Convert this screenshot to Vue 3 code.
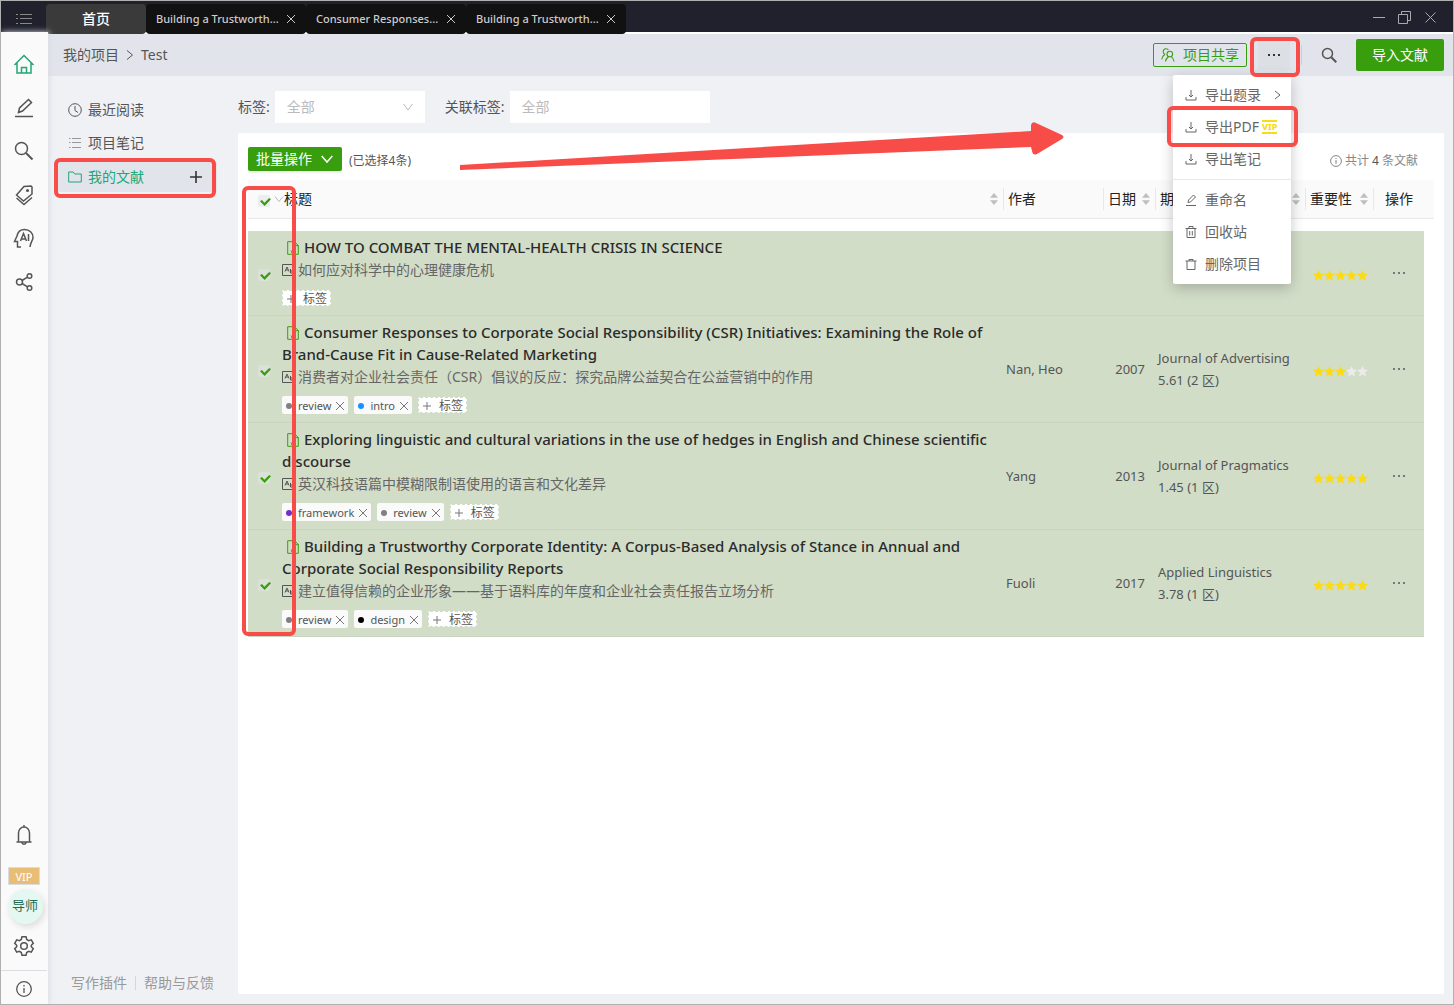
<script setup>
import { ref } from 'vue'

const tabs = ['Building a Trustworth...', 'Consumer Responses...', 'Building a Trustworth...']

const query = ref('')
const tagFilter = ref('')
const allSelected = ref(true)

const papers = ref([
  {
    id: 1, selected: true,
    title: 'HOW TO COMBAT THE MENTAL-HEALTH CRISIS IN SCIENCE',
    translation: '如何应对科学中的心理健康危机',
    tags: [], authors: '', year: '', journal: '', impact: '', stars: 5
  },
  {
    id: 2, selected: true,
    title: 'Consumer Responses to Corporate Social Responsibility (CSR) Initiatives: Examining the Role of Brand-Cause Fit in Cause-Related Marketing',
    translation: '消费者对企业社会责任（CSR）倡议的反应：探究品牌公益契合在公益营销中的作用',
    tags: [{ name: 'review', color: 'gray' }, { name: 'intro', color: 'blue' }],
    authors: 'Nan, Heo', year: '2007', journal: 'Journal of Advertising', impact: '5.61 (2 区)', stars: 3
  },
  {
    id: 3, selected: true,
    title: 'Exploring linguistic and cultural variations in the use of hedges in English and Chinese scientific discourse',
    translation: '英汉科技语篇中模糊限制语使用的语言和文化差异',
    tags: [{ name: 'framework', color: 'purple' }, { name: 'review', color: 'gray' }],
    authors: 'Yang', year: '2013', journal: 'Journal of Pragmatics', impact: '1.45 (1 区)', stars: 5
  },
  {
    id: 4, selected: true,
    title: 'Building a Trustworthy Corporate Identity: A Corpus-Based Analysis of Stance in Annual and Corporate Social Responsibility Reports',
    translation: '建立值得信赖的企业形象——基于语料库的年度和企业社会责任报告立场分析',
    tags: [{ name: 'review', color: 'gray' }, { name: 'design', color: 'black' }],
    authors: 'Fuoli', year: '2017', journal: 'Applied Linguistics', impact: '3.78 (1 区)', stars: 5
  }
])
</script>

<template>
  <div class="window">
    <header class="titlebar">
      <button class="menu-toggle" aria-label="菜单">
        <svg width="16" height="12" viewBox="0 0 16 12" fill="none" stroke="currentColor"><path d="M4 1.500h12M4 5.500h12M4 10.500h12M0 1.500h2M0 5.500h2M0 10.500h2" /></svg>
      </button>
      <button class="tab home">首页</button>
      <div v-for="(tab, i) in tabs" :key="i" class="tab doc">
        <span>{{ tab }}</span>
        <button aria-label="关闭标签页">
          <svg width="10" height="10" viewBox="0 0 10 10" stroke="currentColor"><path d="M1 1l8 8M9 1L1 9" /></svg>
        </button>
      </div>
      <div class="window-controls">
        <button aria-label="最小化"><svg width="13" height="13" viewBox="0 0 13 13" stroke="currentColor"><path d="M1 6.500h12" /></svg></button>
        <button aria-label="还原"><svg width="13" height="13" viewBox="0 0 13 13" fill="none" stroke="currentColor"><path d="M.5 3.500h9v9h-9zM3.500 3V.5h9v9h-3" /></svg></button>
        <button aria-label="关闭"><svg width="13" height="13" viewBox="0 0 13 13" stroke="currentColor"><path d="M1.500 1.500l10 10M11.500 1.500l-10 10" /></svg></button>
      </div>
    </header>

    <div class="shell">
      <nav class="rail" aria-label="主导航">
        <div class="rail-main">
          <button class="active" aria-label="首页">
            <svg width="24" height="24" viewBox="0 0 24 24"><path d="M2.500 13L12 3.500l9.500 9.500M5 11v10h14V11M9.500 21v-5.500h5V21" /></svg>
          </button>
          <button aria-label="写作">
            <svg width="24" height="24" viewBox="0 0 24 24"><path d="M3 20.500h18M6.500 16.500l1-4.500 9-8.500 3 3-9 8.500z" /></svg>
          </button>
          <button aria-label="搜索">
            <svg width="24" height="24" viewBox="0 0 24 24"><circle cx="9.500" cy="9.500" r="6" /><path d="M14 14l6.500 6.500" stroke-width="2" /></svg>
          </button>
          <button aria-label="标签">
            <svg width="24" height="24" viewBox="0 0 24 24"><path d="M4.500 12L12 3.500l7-.5 1 1v7l-8.500 7zM4.500 15l7.500 6.500 8-7" /><circle cx="15.500" cy="7.500" r=".8" /></svg>
          </button>
          <button aria-label="AI 助手">
            <svg width="24" height="24" viewBox="0 0 24 24"><path d="M9 21H5.500V15.500H2.500L5 10C6 5 9 3.500 12.500 3.500c5 0 8.500 3.500 8.500 8 0 3-2.500 4.500-3 9.500M8.500 15l3-7.500 3 7.500M9.500 13h4M16.500 8v7" /></svg>
          </button>
          <button aria-label="分享">
            <svg width="24" height="24" viewBox="0 0 24 24"><circle cx="7.500" cy="12" r="3" /><circle cx="17.500" cy="6" r="2.300" /><circle cx="17.500" cy="18" r="2.300" /><path d="M10 10.500l5.500-3.300M10 13.500l5.500 3.300" /></svg>
          </button>
        </div>
        <div class="rail-foot">
          <button class="bell" aria-label="通知">
            <svg width="24" height="24" viewBox="0 0 24 24"><path d="M4.500 19h15M6.500 19V10c0-3.500 2.500-6 5.500-6s5.500 2.500 5.500 6v9M12 4V2M9.800 19.500a2.300 2.300 0 0 0 4.400 0" /></svg>
          </button>
          <span class="vip">VIP</span>
          <button class="avatar">导师</button>
          <button class="gear" aria-label="设置">
            <svg width="24" height="24" viewBox="0 0 24 24"><path d="M10 2.800h4l.7 2.700 1.900 1.100 2.700-.8 2 3.500-2 1.900v1.600l2 1.900-2 3.500-2.700-.8-1.900 1.100-.7 2.700h-4l-.7-2.700-1.900-1.100-2.700.8-2-3.500 2-1.900v-1.600l-2-1.900 2-3.500 2.700.8 1.900-1.100z" /><circle cx="12" cy="12" r="3.300" /></svg>
          </button>
          <button class="about" aria-label="关于">
            <svg width="18" height="18" viewBox="0 0 18 18"><circle cx="9" cy="9" r="7.300" /><path d="M9 8v5M9 5v1.500" /></svg>
          </button>
        </div>
      </nav>

      <div class="page">
        <div class="topbar">
          <div class="crumbs"><span>我的项目</span><svg width="8" height="12" viewBox="0 0 8 12" fill="none" stroke="currentColor"><path d="M1 1.500L6.500 6 1 10.500" /></svg><span>Test</span></div>
          <div class="actions">
            <button class="share">
              <svg width="14" height="14" viewBox="0 0 14 14" fill="none" stroke="currentColor" stroke-width="1.100"><circle cx="8.800" cy="6" r="2.800" /><path d="M4.500 13.500c.3-2.500 1.600-3.800 3-5M10.300 8.600c1.400 1 2.300 2.500 2.700 4.900M7.500 2A2.900 2.900 0 1 0 4.300 6.400M4 6.200C2 7.500 1 9 .7 11.500" /></svg>
              <span>项目共享</span>
            </button>
            <div class="more-wrap">
              <button class="more" aria-label="更多" aria-expanded="true"><i></i><i></i><i></i></button>
              <div class="mark more-mark"></div>
              <div class="menu" role="menu">
                <button role="menuitem">
                  <svg class="mi" viewBox="0 0 12 12"><path d="M6 1v7M4 6l2 2 2-2M1 8v3h10V8" /></svg>导出题录
                  <svg class="next" width="7" height="10" viewBox="0 0 7 10"><path d="M1 1l5 4-5 4" /></svg>
                </button>
                <button role="menuitem">
                  <svg class="mi" viewBox="0 0 12 12"><path d="M6 1v7M4 6l2 2 2-2M1 8v3h10V8" /></svg>导出PDF<b>VIP</b>
                  <span class="mark pdf-mark"></span>
                </button>
                <button role="menuitem"><svg class="mi" viewBox="0 0 12 12"><path d="M6 1v7M4 6l2 2 2-2M1 8v3h10V8" /></svg>导出笔记</button>
                <hr />
                <button role="menuitem"><svg class="mi" viewBox="0 0 12 12"><path d="M1 11.500h10M3 8.500l.5-2.500 5-5 2 2-5 5z" /></svg>重命名</button>
                <button role="menuitem"><svg class="mi" viewBox="0 0 12 12"><path d="M.5 2.500h11M2 2.500v9h8v-9M4 2.500v-2h4v2M4.700 5v4.500M7.300 5v4.500" /></svg>回收站</button>
                <button role="menuitem"><svg class="mi" viewBox="0 0 12 12"><path d="M.5 3h11M2 3v8.500h8V3M4 3V1.500h4V3" /></svg>删除项目</button>
              </div>
            </div>
            <button class="find" aria-label="搜索文献">
              <svg width="16" height="16" viewBox="0 0 16 16" fill="none" stroke="currentColor" stroke-width="1.500"><circle cx="6.500" cy="6.500" r="5" /><path d="M10.300 10.300l5 5" stroke-width="2" /></svg>
            </button>
            <button class="import">导入文献</button>
          </div>
        </div>

        <div class="body">
          <aside class="side">
            <nav>
              <a href="#recent"><svg viewBox="0 0 14 14"><circle cx="7" cy="7" r="6.300" /><path d="M7 3v4.500l3 2" /></svg>最近阅读</a>
              <a href="#notes"><svg class="light" viewBox="0 0 14 14"><path d="M4 2.500h9M4 6.500h9M4 11.500h9M1 2.500h1.500M1 6.500h1.500M1 11.500h1.500" /></svg>项目笔记</a>
              <div class="current">
                <a href="#papers"><svg viewBox="0 0 14 14"><path d="M.7 2h4.500l1.500 2h6.600v8H.7z" /></svg>我的文献</a>
                <button aria-label="新建文件夹"><svg width="12" height="12" viewBox="0 0 12 12"><path d="M6 0v12M0 6h12" stroke-width="1.600" /></svg></button>
                <div class="mark side-mark"></div>
              </div>
            </nav>
            <footer><a href="#plugin">写作插件</a><a href="#help">帮助与反馈</a></footer>
          </aside>

          <main>
            <form class="filters" @submit.prevent>
              <label for="tag">标签:</label>
              <div class="select">
                <select id="tag" v-model="tagFilter"><option value="">全部</option></select>
                <svg width="10" height="8" viewBox="0 0 10 8"><path d="M.5 1L5 7l4.500-6" /></svg>
              </div>
              <label for="linked">关联标签:</label>
              <input id="linked" v-model="query" type="text" placeholder="全部" />
            </form>

            <section class="panel">
              <div class="toolbar">
                <button class="batch">批量操作<svg width="12" height="8" viewBox="0 0 12 8"><path d="M.7 1L6 7l5.300-6" /></svg></button>
                <span class="picked">(已选择4条)</span>
                <span class="total"><svg width="12" height="12" viewBox="0 0 12 12"><circle cx="6" cy="6" r="5.400" /><path d="M6 5v4M6 3v1" /></svg>共计 <em>4</em> 条文献</span>
              </div>

              <svg class="arrow" width="604" height="48" viewBox="0 0 604 48" aria-hidden="true">
                <path d="M0 43L0 48L571 25L572 29Q573 34 577 32L602 17Q605 15 602 13L576 1Q572-1 571 3V9Z" />
              </svg>

              <div class="grid">
                <table class="head">
                  <colgroup><col class="c-check" /><col /><col class="c-author" /><col class="c-year" /><col class="c-journal" /><col class="c-stars" /><col class="c-ops-head" /></colgroup>
                  <thead>
                    <tr>
                      <th class="check"><div><input v-model="allSelected" type="checkbox" aria-label="全选" /><svg width="8" height="6" viewBox="0 0 8 6"><path d="M0 .5l4 5 4-5" /></svg></div></th>
                      <th class="first"><div>标题<i class="sort"></i></div></th>
                      <th><div>作者</div></th>
                      <th><div>日期<i class="sort"></i></div></th>
                      <th><div>期刊<i class="sort"></i></div></th>
                      <th><div>重要性<i class="sort"></i></div></th>
                      <th class="ops"><div>操作</div></th>
                    </tr>
                  </thead>
                </table>
                <table class="rows">
                  <colgroup><col class="c-check" /><col /><col class="c-author" /><col class="c-year" /><col class="c-journal" /><col class="c-stars" /><col class="c-ops" /></colgroup>
                  <tbody>
                    <tr v-for="p in papers" :key="p.id">
                      <td class="check"><div><input v-model="p.selected" type="checkbox" :aria-label="p.title" /></div></td>
                      <td class="paper">
                        <h3><svg width="12" height="14" viewBox="0 0 12 14"><path d="M.7.700h6.800l3.800 3.800v8.800H.7zM7.500.700v4h4M4 11.500c2-1 3-2.500 3.500-4.500M4 9.500l1.500 2" /></svg>{{ p.title }}</h3>
                        <p><svg width="14" height="12" viewBox="0 0 14 12"><path d="M.5.500h13v11H.5zM3 7.500L5 3l2 4.500M3.800 6h2.500M8.500 5v4M8.500 7h2.500v2H8.500" /></svg>{{ p.translation }}</p>
                        <div class="tags">
                          <span v-for="t in p.tags" :key="t.name" class="tag"><i :class="t.color"></i>{{ t.name }}<button :aria-label="'移除 ' + t.name"><svg width="8" height="8" viewBox="0 0 8 8"><path d="M0 0l8 8M8 0L0 8" /></svg></button></span>
                          <button class="add"><svg width="8" height="8" viewBox="0 0 8 8"><path d="M4 0v8M0 4h8" /></svg>标签</button>
                        </div>
                      </td>
                      <td class="author">{{ p.authors }}</td>
                      <td class="year">{{ p.year }}</td>
                      <td class="journal">{{ p.journal }}<br />{{ p.impact }}</td>
                      <td class="rating"><div role="img" :aria-label="p.stars + ' 星'"><svg v-for="n in 5" :key="n" :class="{ on: n <= p.stars }" width="11" height="11" viewBox="0 0 11 11"><path d="M5.500 0l1.600 3.400 3.900.5-2.900 2.700.8 3.900-3.400-1.900-3.400 1.900.8-3.900L0 3.900l3.900-.5z" /></svg></div></td>
                      <td class="ops"><button class="dots" aria-label="操作"><i></i><i></i><i></i></button></td>
                    </tr>
                  </tbody>
                </table>
                <div class="mark check-mark"></div>
              </div>
            </section>
          </main>
        </div>
      </div>
    </div>
  </div>
</template>

<style>
body { margin: 0; background: #f0f1f5; }
</style>

<style scoped>
* { box-sizing: border-box; }
.window {
  display: flex; flex-direction: column; min-height: 100vh; overflow: hidden;
  border: 1px solid #b0b0b0; background: #f0f1f5; color: #555;
  font: 14px/22px "Noto Sans", "Noto Sans CJK SC", sans-serif;
}
button { border: 0; padding: 0; background: none; color: inherit; font: inherit; cursor: pointer; }
a { color: inherit; text-decoration: none; }
svg { display: block; flex: none; overflow: visible; }

.titlebar { display: flex; height: 31px; background: #20212c; position: relative; z-index: 1; color: #aaa; }
.menu-toggle { width: 45px; display: flex; align-items: center; justify-content: center; padding-top: 5px; color: #888; }
.tab { height: 30px; margin-top: 3px; border-radius: 4px; flex: none; }
.home { width: 100px; background: #3a3a3a; color: #fff; font-weight: 500; }
.doc { width: 160px; display: flex; align-items: center; justify-content: space-between; padding: 0 10px; background: #111; color: #ccc; font-size: 11px; font-weight: 500; white-space: nowrap; }
.window-controls { margin-left: auto; display: flex; align-items: center; gap: 13px; padding: 2px 16px 0 0; }

.shell { flex: 1; display: flex; }
.rail { width: 47px; flex: none; display: flex; flex-direction: column; justify-content: space-between; background: #fafafa; color: #555; box-shadow: 1px 0 6px #d9dbe2; padding: 20px 1px 1px 0; z-index: 1; }
.rail svg { fill: none; stroke: currentColor; stroke-width: 1.500px; }
.rail-main { display: flex; flex-direction: column; align-items: center; justify-content: space-between; height: 242px; }
.rail-main .active { color: #21a675; }
.rail-foot { display: flex; flex-direction: column; align-items: center; }
.vip { width: 32px; height: 18px; margin-top: 20px; border: 1px solid #dcdcdc; background: #e8bd76; color: #fff; font-size: 11px; line-height: 17px; text-align: center; }
.avatar { width: 35px; height: 35px; margin: 4px 0 10px 2px; padding-bottom: 4px; border-radius: 50%; background: #e4f8f1; color: #1c6b50; font-size: 13px; box-shadow: 2px 3px 6px #ddd; white-space: nowrap; }
.about { width: 100%; height: 33px; margin-top: 12px; padding-top: 4px; border-top: 1px solid #dcdde2; display: flex; align-items: center; justify-content: center; }
.rail .about svg { stroke-width: 1.300px; }

.page { flex: 1; min-width: 0; display: flex; flex-direction: column; border-top: 2px solid #fff; }
.topbar { height: 42px; display: flex; align-items: center; justify-content: space-between; padding: 0 9px 0 15px; background: #e1e4eb; }
.crumbs { display: flex; align-items: center; gap: 7px; }
.actions { display: flex; align-items: center; }
.share { width: 94px; height: 24px; display: flex; align-items: center; justify-content: space-between; padding: 0 7px; border: 1px solid #389e0d; border-radius: 2px; color: #389e0d; white-space: nowrap; }
.more-wrap { position: relative; margin: 0 11px; }
.more { width: 32px; height: 30px; display: flex; align-items: center; justify-content: center; gap: 3px; background: #dcdfe4; }
.more i { width: 2px; height: 2px; background: #333; }
.mark { position: absolute; border: 4px solid #f84c49; border-radius: 6px; pointer-events: none; }
.more-mark { left: -8px; right: -10px; top: -3px; bottom: -7px; z-index: 4; }
.menu { position: absolute; z-index: 3; right: -1px; top: 35px; width: 118px; padding: 4px 0; background: #fff; border-radius: 2px; box-shadow: 0 4px 14px rgba(0, 0, 0, .22); }
.menu button { position: relative; width: 100%; height: 32px; padding-left: 12px; display: flex; align-items: center; white-space: nowrap; color: #666; }
.menu svg { fill: none; stroke: currentColor; }
.mi { width: 12px; height: 12px; margin-right: 8px; }
.next { position: absolute; right: 10px; }
.menu hr { height: 1px; margin: 4px 0; border: 0; background: #e8e8e8; }
.menu b { margin-left: 3px; border: solid #fadb14; border-width: 2px 0; color: #fadb14; font-size: 9px; font-weight: 800; line-height: 10px; }
.menu .pdf-mark { left: -6px; right: -7px; top: -5px; bottom: -4px; }
.find { width: 55px; height: 20px; display: flex; align-items: center; justify-content: center; border-left: 1px solid #ccced4; color: #555; }
.import { width: 88px; height: 32px; border-radius: 2px; background: #389e0d; color: #fff; }

.body { flex: 1; display: flex; padding: 0 9px 10px 0; }
.side { width: 190px; flex: none; display: flex; flex-direction: column; justify-content: space-between; padding: 17px 21px 0 10px; }
.side nav a { display: flex; align-items: center; height: 33px; padding-left: 10px; gap: 6px; }
.side svg { width: 14px; height: 14px; fill: none; stroke: currentColor; }
.side svg.light { stroke: #999; }
.side .current { position: relative; display: flex; align-items: center; justify-content: space-between; height: 30px; margin-top: 3px; padding-right: 15px; background: #e1e4eb; color: #21a675; }
.current button { color: #333; }
.current button svg { width: 12px; height: 12px; }
.side-mark { left: -4px; right: 1px; top: -4px; bottom: -6px; }
.side footer { display: flex; color: #999; padding-left: 13px; line-height: 14px; margin-bottom: 4px; white-space: nowrap; }
.side footer a + a { margin-left: 8px; padding-left: 8px; border-left: 1px solid #d5d6da; }

main { flex: 1; min-width: 0; display: flex; flex-direction: column; }
.filters { display: flex; align-items: center; margin: 15px 0 10px; height: 32px; }
.filters label { margin-right: 5px; white-space: nowrap; }
.select { position: relative; width: 150px; margin-right: 20px; }
.select svg { position: absolute; right: 12px; top: 12px; fill: none; stroke: #bbb; pointer-events: none; }
.filters select, .filters input { appearance: none; width: 150px; height: 32px; padding: 0 12px; border: 0; border-radius: 0; background: #fff; color: #bbb; font: inherit; }
.filters input { width: 200px; padding-bottom: 2px; }
.filters input::placeholder { color: #bbb; opacity: 1; }

.panel { position: relative; flex: 1; padding: 14px 10px; background: #fff; border-radius: 2px; }
.toolbar { display: flex; align-items: center; height: 24px; margin-bottom: 9px; font-size: 12px; }
.batch { width: 94px; height: 24px; margin-right: 7px; display: flex; align-items: center; justify-content: space-between; padding: 0 9px 0 8px; border-radius: 2px; background: #389e0d; color: #fff; font-size: 14px; box-shadow: 0 2px 2px #eee; }
.batch svg { fill: none; stroke: currentColor; stroke-width: 1.500px; }
.picked, .total { padding-top: 3px; }
.total { margin-left: auto; display: flex; align-items: center; gap: 3px; padding-right: 16px; color: #888; white-space: nowrap; }
.total svg { fill: none; stroke: currentColor; }
.total em { font-style: normal; color: #555; }
.arrow { position: absolute; left: 222px; top: -11px; fill: #f84c49; z-index: 2; pointer-events: none; }

.grid { position: relative; }
table { border-collapse: separate; border-spacing: 0; table-layout: fixed; width: 100%; }
th, td { padding: 0; font-weight: 400; text-align: left; }
.c-check { width: 34px; }
.c-author { width: 100px; }
.c-year { width: 52px; }
.c-journal { width: 150px; }
.c-stars { width: 68px; }
.c-ops-head { width: 61px; }
.c-ops { width: 51px; }
.head { background: #fafafa; color: #222; }
.head th { height: 39px; border-bottom: 1px solid #e8e8e8; }
.head th > div { display: flex; align-items: center; justify-content: space-between; height: 22px; padding: 0 5px 0 4px; border-left: 1px solid #e8e8e8; white-space: nowrap; }
.head .first > div { padding-left: 2px; border: 0; }
.head th.check > div { border: 0; padding: 0 0 0 10px; justify-content: flex-start; gap: 5px; }
.head th.check svg { fill: none; stroke: #bbb; }
.head .ops > div { padding-left: 11px; }
.sort { width: 8px; height: 12px; background: #bfbfbf; clip-path: polygon(50% 0, 100% 40%, 0 40%, 0 60%, 100% 60%, 50% 100%, 0 60%, 0 40%); }

input[type="checkbox"] { appearance: none; flex: none; width: 12px; height: 12px; margin: 4px 0 0; border-radius: 2px; background: #ebedee; display: grid; place-items: center; }
.rows input[type="checkbox"] { background: #dae2d7; }
input[type="checkbox"]:checked::after { content: ""; width: 11px; height: 8px; margin: 2px 0 0 2px; background: #389e0d; clip-path: polygon(0 40%, 18% 26%, 40% 58%, 84% 0, 100% 16%, 42% 100%); }

.rows { width: calc(100% - 10px); margin-top: 12px; background: #d2ddc8; }
.rows td { border-bottom: 1px solid #c9d4c0; }
.rows td.check { padding-left: 10px; }
.rows .paper { padding: 5px 2px 1px 0; }
.paper h3 { margin: 0; font-size: 15px; line-height: 22px; font-weight: 500; color: #2b2b2b; }
.paper h3 svg { display: inline-block; vertical-align: -2px; margin: 0 5px; fill: none; stroke: #389e0d; }
.paper p { margin: 0; height: 24px; display: flex; align-items: center; gap: 2px; color: #666; white-space: nowrap; }
.paper p svg { fill: none; stroke: #555; }
.tags { display: flex; align-items: center; height: 32px; gap: 6px; font-size: 11px; line-height: 18px; }
.tag { display: flex; align-items: center; height: 18px; padding: 1px 4px 0; border-radius: 2px; background: #fafafa; }
.tag i { width: 6px; height: 6px; margin-right: 6px; border-radius: 50%; }
.tag button { margin-left: 5px; }
.tags svg { fill: none; stroke: #777; }
.gray { background: #808080; }
.blue { background: #1890ff; }
.purple { background: #722ed1; }
.black { background: #000; }
.add { display: flex; align-items: center; height: 16px; gap: 8px; padding: 1px 3px 0 4px; background: #fff; border: 1px dashed #d2ddc8; border-radius: 2px; font-size: 12px; white-space: nowrap; }
.rows .author { padding-left: 3px; }
.rows .year { padding-right: 10px; text-align: right; }
.rows .journal { padding-left: 3px; white-space: nowrap; }
.author, .year, .journal { font-size: 13px; }
.rating div { display: flex; padding: 4px 0 0 8px; }
.rating svg { fill: #ebecea; }
.rating svg.on { fill: #fadb14; }
.rows .ops { padding-left: 20px; }
.dots { display: flex; gap: 3px; padding: 4px 0; }
.dots i { width: 2px; height: 2px; background: #777; }
.check-mark { left: -6px; width: 54px; top: 6px; bottom: 1px; z-index: 1; }
</style>
